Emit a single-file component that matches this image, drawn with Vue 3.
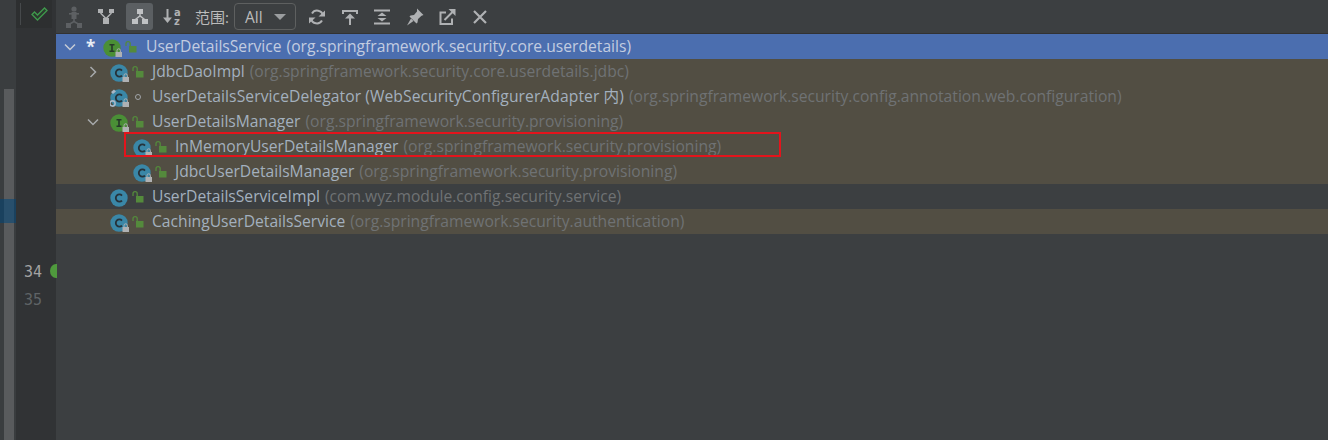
<script setup>
const rows = [
  { depth: 0, arrow: 'down', kind: 'I', star: true, name: 'UserDetailsService', pkg: '(org.springframework.security.core.userdetails)', tone: 'selected' },
  { depth: 1, arrow: 'right', kind: 'C', name: 'JdbcDaoImpl', pkg: '(org.springframework.security.core.userdetails.jdbc)', tone: 'tan' },
  { depth: 1, kind: 'C', gear: true, dot: true, wide: true, name: 'UserDetailsServiceDelegator (WebSecurityConfigurerAdapter 内)', pkg: '(org.springframework.security.config.annotation.web.configuration)', tone: 'tan' },
  { depth: 1, arrow: 'down', kind: 'I', name: 'UserDetailsManager', pkg: '(org.springframework.security.provisioning)', tone: 'tan' },
  { depth: 2, kind: 'C', name: 'InMemoryUserDetailsManager', pkg: '(org.springframework.security.provisioning)', tone: 'tan' },
  { depth: 2, kind: 'C', name: 'JdbcUserDetailsManager', pkg: '(org.springframework.security.provisioning)', tone: 'tan' },
  { depth: 1, kind: 'C', noLock: true, name: 'UserDetailsServiceImpl', pkg: '(com.wyz.module.config.security.service)', tone: 'plain' },
  { depth: 1, kind: 'C', name: 'CachingUserDetailsService', pkg: '(org.springframework.security.authentication)', tone: 'tan' }
]
</script>

<template>
  <div class="screen">
    <aside class="editor-strip">
      <div class="scroll-track">
        <div class="scroll-thumb"></div>
      </div>
      <div class="gutter">
        <div class="check-cell">
          <span class="check-rule"></span>
          <svg width="17" height="15" viewBox="0 0 17 15" fill="none">
            <path d="M1 7.500L3.500 5l3 3L13.500 1 16 3.500 6.500 13z" stroke="#3f9a4c" stroke-width="1.300" fill="#2b3a2e" />
          </svg>
        </div>
        <div class="line-nums">
          <div class="num current">34<span class="bean"></span></div>
          <div class="num">35</div>
        </div>
      </div>
    </aside>

    <main class="popup">
      <div class="toolbar">
        <button class="tool dim">
          <svg width="16" height="22" viewBox="0 0 16 22" fill="#5d6063">
            <circle cx="8" cy="3" r="2.600" /><rect x="5.500" y="6" width="5" height="7" /><rect x="3" y="7" width="10" height="1.600" />
            <path d="M7.200 12h1.600v3l5 3-.8 1.300L8 16.600l-5 2.700-.8-1.300 5-3z" /><rect x="0" y="17" width="5" height="5" /><rect x="11" y="17" width="5" height="5" />
          </svg>
        </button>
        <button class="tool">
          <svg width="16" height="15" viewBox="0 0 16 15" fill="#afb1b3">
            <rect x="0" y="0" width="5" height="4" /><rect x="11" y="0" width="5" height="4" /><rect x="5" y="9" width="6" height="6" />
            <path d="M3 3.500l5 5 5-5 1 1-5.300 5.500H7.300L2 4.500z" />
          </svg>
        </button>
        <button class="tool active">
          <svg width="16" height="15" viewBox="0 0 16 15" fill="#c0c2c4">
            <rect x="5" y="0" width="6" height="5" /><rect x="0" y="10" width="6" height="5" /><rect x="10" y="10" width="6" height="5" />
            <path d="M7.300 4.500h1.400v2l5 4-1 1-4.700-3.700-4.700 3.700-1-1 5-4z" />
          </svg>
        </button>
        <button class="tool">
          <svg width="18" height="17" viewBox="0 0 18 17" fill="none">
            <path d="M4.500 1v10" stroke="#afb1b3" stroke-width="2" />
            <path d="M0 9.500h9L4.500 15z" fill="#afb1b3" />
            <text x="11" y="7.500" class="sort-txt">a</text>
            <text x="11" y="16.500" class="sort-txt">z</text>
          </svg>
        </button>
        <span class="scope-label">范围:</span>
        <div class="combo">
          <span>All</span>
          <span class="caret"></span>
        </div>
        <div class="tool-group">
          <button class="tool">
            <svg width="16" height="16" viewBox="0 0 16 16" fill="none" stroke="#afb1b3" stroke-width="2">
              <path d="M14 6.500A6 6 0 0 0 3 4.500M2 9.500a6 6 0 0 0 11 2" />
              <path d="M9.500 7.500H16V1.500z" fill="#afb1b3" stroke="none" /><path d="M6.500 8.500H0v6z" fill="#afb1b3" stroke="none" />
            </svg>
          </button>
          <button class="tool">
            <svg width="16" height="16" viewBox="0 0 16 16" fill="none" stroke="#afb1b3" stroke-width="2">
              <path d="M1 5V2h14v3M8 8v8" />
              <path d="M3 9.500L8 4.500l5 5z" fill="#afb1b3" stroke="none" />
            </svg>
          </button>
          <button class="tool">
            <svg width="16" height="16" viewBox="0 0 16 16" fill="none" stroke="#afb1b3" stroke-width="2">
              <path d="M0 1.500h16M0 14.500h16" />
              <path d="M3.500 7L8 3.500 12.500 7zM3.500 9L8 12.500 12.500 9z" fill="#afb1b3" stroke="none" />
            </svg>
          </button>
          <button class="tool">
            <svg width="18" height="18" viewBox="0 0 18 18" fill="#afb1b3">
              <path d="M11 0.500l6.500 6.500-2 .8-3.500 3.200-.5 3.500-1 1L3.500 8.500l1-1 3.500-.5L11 3.500z" />
              <path d="M5 10.500l2.500 2.500L1 17.500z" />
            </svg>
          </button>
          <button class="tool">
            <svg width="17" height="16" viewBox="0 0 17 16" fill="none" stroke="#afb1b3" stroke-width="2">
              <path d="M7 3.500H1.500V15h11.500V9.500M5.500 11L14 2.500" />
              <path d="M9.500 0h7v7z" fill="#afb1b3" stroke="none" />
            </svg>
          </button>
          <button class="tool">
            <svg width="14" height="14" viewBox="0 0 14 14" fill="none" stroke="#afb1b3" stroke-width="2.200">
              <path d="M1 1l12 12M13 1L1 13" />
            </svg>
          </button>
        </div>
      </div>

      <div class="tree">
        <div
          v-for="row in rows"
          :key="row.name"
          class="row"
          :class="[row.tone, 'depth-' + row.depth]"
        >
          <span class="arrow">
            <svg v-if="row.arrow === 'down'" width="12" height="8" viewBox="0 0 12 8" fill="none" stroke="currentColor" stroke-width="1.500">
              <path d="M1 1.500l5 5 5-5" />
            </svg>
            <svg v-else-if="row.arrow === 'right'" width="8" height="12" viewBox="0 0 8 12" fill="none" stroke="currentColor" stroke-width="1.500">
              <path d="M1.500 1l5 5-5 5" />
            </svg>
          </span>
          <span v-if="row.star" class="star">*</span>
          <span class="node-icon">
            <svg width="22" height="24" viewBox="0 0 22 24">
              <circle cx="9" cy="9" r="8.700" :fill="row.kind === 'I' ? '#4a8f36' : '#3a87a7'" />
              <path
                v-if="row.kind === 'C'"
                d="M12 6.500A3.600 3.600 0 1 0 12 11.500"
                fill="none"
                stroke="#26323a"
                stroke-width="1.800"
              />
              <path v-else d="M6.500 5h5v1.500H9.800v5h1.700V13h-5v-1.500h1.700v-5H6.500z" fill="#26382a" />
              <template v-if="row.gear">
                <circle cx="2.500" cy="14.500" r="2.600" fill="none" stroke="#a9b7c6" stroke-width="1.600" />
                <path d="M1 3l3-2.500 2 2-3 2.500z" fill="#a9b7c6" />
              </template>
              <template v-if="!row.noLock">
                <rect x="12.500" y="13" width="6.500" height="5" fill="#afb1b3" />
                <path d="M14 13v-1.500a1.700 1.700 0 0 1 3.400 0V13" fill="none" stroke="#afb1b3" stroke-width="1" />
              </template>
            </svg>
          </span>
          <span class="vis-icon">
            <span v-if="row.dot" class="vis-dot"></span>
            <svg v-else width="12" height="12" viewBox="0 0 12 12">
              <rect x="4" y="5" width="7.500" height="6.500" fill="#548a3c" />
              <path d="M1 5V2.800a2.100 2.100 0 0 1 4.200 0V5" fill="none" stroke="#548a3c" stroke-width="1.300" />
            </svg>
          </span>
          <span class="name" :class="{ wide: row.wide }">{{ row.name }}</span>
          <span class="pkg">{{ row.pkg }}</span>
        </div>
        <div class="mark-box"></div>
      </div>
    </main>
  </div>
</template>

<style>
html,
body {
  margin: 0;
  background: #3c3f41;
}
</style>

<style scoped>
.screen {
  display: flex;
  width: 1328px;
  height: 440px;
  overflow: hidden;
  background: #3c3f41;
  font-family: "Open Sans", "Noto Sans CJK SC", sans-serif;
}

.editor-strip {
  position: relative;
  display: flex;
  width: 56px;
  flex-shrink: 0;
  background: #313335;
}

.scroll-track {
  width: 16px;
  flex-shrink: 0;
  padding-top: 89px;
  box-sizing: border-box;
  background: #3a3d3f;
}

.scroll-thumb {
  width: 10px;
  height: 351px;
  margin-left: 4px;
  background: #595b5d;
}

.editor-strip::after {
  content: '';
  position: absolute;
  left: 0;
  top: 199px;
  width: 16px;
  height: 24px;
  background: rgba(0, 70, 120, 0.55);
}

.gutter {
  flex: 1;
  min-width: 0;
}

.check-cell {
  display: flex;
  align-items: center;
  gap: 10px;
  width: 32px;
  height: 28px;
  padding-left: 4px;
  background: #2d2f30;
}

.check-rule {
  width: 1px;
  height: 22px;
  background: #46494b;
}

.line-nums {
  padding-top: 230px;
}

.num {
  position: relative;
  height: 28px;
  padding-left: 8px;
  font-size: 15px;
  line-height: 28px;
  color: #5f6366;
  font-family: "DejaVu Sans Mono", monospace;
}

.num.current {
  color: #a4a3a3;
}

.bean {
  position: absolute;
  left: 34px;
  top: 6px;
  width: 12px;
  height: 14px;
  border-radius: 50%;
  background: #4f9a3d;
  clip-path: inset(0 5px 0 0);
}

.popup {
  flex: 1;
  min-width: 0;
  display: flex;
  flex-direction: column;
}

.toolbar {
  display: flex;
  align-items: center;
  height: 33px;
  padding-left: 2px;
  border-bottom: 1px solid #323232;
}

.tool {
  display: flex;
  align-items: center;
  justify-content: center;
  width: 32px;
  height: 27px;
  padding: 0;
  border: 0;
  border-radius: 3px;
  background: transparent;
}

.tool.active {
  width: 27px;
  margin: 0 3px 0 4px;
  background: #5b5f62;
}

.sort-txt {
  fill: #afb1b3;
  stroke: none;
  font-size: 10px;
  font-weight: 700;
  font-family: "DejaVu Sans", sans-serif;
}

.scope-label {
  margin-left: 7px;
  font-size: 15px;
  color: #bbbbbb;
}

.combo {
  display: flex;
  align-items: center;
  justify-content: space-between;
  box-sizing: border-box;
  width: 62px;
  height: 27px;
  margin-left: 5px;
  padding: 0 9px 0 10px;
  border: 1px solid #5e6060;
  border-radius: 4px;
  background: #3c3f41;
  font-size: 15.500px;
  color: #bbbbbb;
}

.caret {
  width: 0;
  height: 0;
  border-left: 6px solid transparent;
  border-right: 6px solid transparent;
  border-top: 6px solid #9a9d9f;
}

.tool-group {
  display: flex;
  margin-left: 5px;
}

.tool-group .tool {
  width: 32.600px;
}

.tree {
  position: relative;
}

.row {
  display: flex;
  align-items: center;
  height: 25px;
  white-space: nowrap;
  font-size: 15.650px;
  color: #a3b0be;
}

.row.tan {
  background: #524e43;
}

.row.selected {
  background: #4b6eaf;
}

.row.depth-0 { padding-left: 7px; }
.row.depth-1 { padding-left: 30px; }
.row.depth-2 { padding-left: 53px; }

.row.depth-0 .node-icon { margin-left: 4px; }
.row.depth-0 .vis-icon { margin-right: 9px; }

.arrow {
  display: flex;
  align-items: center;
  justify-content: center;
  width: 14px;
  flex-shrink: 0;
  margin-right: 10px;
  color: #a7a9ab;
}

.row.selected .arrow {
  color: #c5cbd5;
}

.star {
  width: 13px;
  margin-left: -1px;
  font-size: 17px;
  line-height: 25px;
  font-weight: 700;
  color: #e8edf5;
}

.node-icon {
  display: flex;
  width: 22px;
  height: 24px;
  margin-top: 8px;
  flex-shrink: 0;
}

.vis-icon {
  display: flex;
  align-items: center;
  justify-content: center;
  width: 12px;
  margin-top: 1px;
  margin-right: 8px;
  flex-shrink: 0;
}

.vis-dot {
  width: 4px;
  height: 4px;
  border: 1.500px solid #a0a4a8;
  border-radius: 50%;
}

.name,
.pkg {
  margin-top: -2px;
}

.name.wide {
  letter-spacing: 0.08px;
}

.pkg {
  margin-left: 5px;
  color: #6f7274;
}

.row.selected .pkg,
.row.selected .name {
  color: #c2cce0;
}

.mark-box {
  position: absolute;
  left: 68px;
  top: 98px;
  width: 657px;
  height: 25px;
  box-sizing: border-box;
  border: 2px solid #e3141c;
}
</style>
